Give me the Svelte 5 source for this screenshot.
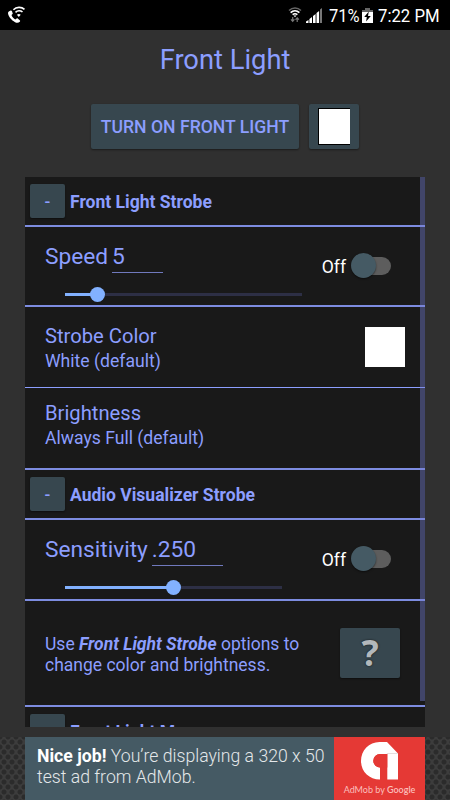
<script>
  const speed = { value: 5, percent: 13.8 };
  const sensitivity = { value: '.250', percent: 50 };
</script>

{#snippet toggle()}
  <div class="toggle"><span>Off</span><i class="track"><b></b></i></div>
{/snippet}

{#snippet slider(percent)}
  <div class="slider">
    <div class="fill" style="width: {percent}%"></div>
    <div class="thumb" style="left: {percent}%"></div>
  </div>
{/snippet}

<div class="screen">
  <header class="status">
    <svg class="call" width="18" height="18" viewBox="0 0 18 18" fill="none" stroke="#fff">
      <path d="M.8 5.600 2.600 4.600c.8-.2 1.200.2 1.500 1l.7 2.200-1.300 1.300c.7 2 1.900 3.300 3.700 4.300l1.500-.9c.6-.3 1.100-.1 1.600.4l1.700 1.600c.3.4.2.8-.2 1.200-1.300 1.400-3 1.300-4.700.5C3.400 14.300.4 10.500 0 7.300 0 6.500.2 6 .8 5.600Z" fill="#fff" stroke="none" />
      <path d="M5.400 3.700C8.400.7 13.500.7 16.500 3.300M7.500 6.300c2-1.900 5-2 7-.3" stroke-width="1.600" />
      <path d="M8.900 8.700c1.200-1.100 2.700-1.100 3.800 0L10.800 11Z" fill="#fff" stroke="none" />
    </svg>
    <div class="right">
      <svg width="14" height="18" viewBox="0 0 14 18" fill="none">
        <path d="M1 4.500C4.500 1.300 9.500 1.300 13 4.500" stroke="#666" stroke-width="1.500" />
        <path d="M2.600 6.600c2.600-2.300 6.200-2.300 8.800 0M4.600 8.700c1.500-1.200 3.300-1.200 4.800 0" stroke="#fff" stroke-width="1.600" />
        <path d="M5.500 9.600h3L7 11.200Z" fill="#fff" />
        <path d="M4.700 11v4M3 13.400l1.700 1.900 1.700-1.900M9.200 16v-4M7.500 13.700l1.700-1.900 1.700 1.900" stroke="#777" stroke-width="1.200" />
      </svg>
      <svg class="signal" width="17" height="17" viewBox="0 0 17 17" fill="#fff">
        <path d="M0 17v-1.500l2.500-1.500v3ZM3.400 17v-4L6 11v6ZM7 17v-7l2.600-2v9ZM10.500 17V7l2.600-2v12Z" />
        <path d="M14 17V3.500L16 2v15Z" fill="#777" />
      </svg>
      <span class="percent">71%</span>
      <svg class="battery" width="11" height="17" viewBox="0 0 11 17">
        <path d="M3 1h5v2h3v3H0V3h3Z" fill="#666" />
        <path d="M0 5h11v11H0Z" fill="#fff" />
        <path d="M6.800 4.500 2.200 10h2.600l-.7 4.500L8.800 9H6Z" fill="#000" />
      </svg>
      <span class="clock">7:22 PM</span>
    </div>
  </header>

  <h1><span>Front Light</span></h1>
  <div class="actions">
    <button class="turn"><span>TURN ON FRONT LIGHT</span></button>
    <button class="colour" aria-label="Front light color"><i></i></button>
  </div>

  <main>
    <section class="head"><button>-</button><h2>Front Light Strobe</h2></section>

    <section class="control">
      <div class="top">
        <label for="speed">Speed</label>
        <span id="speed" class="field">{speed.value}</span>
      </div>
      {@render toggle()}
      {@render slider(speed.percent)}
    </section>

    <section class="option strobe">
      <div><h3>Strobe Color</h3><p>White (default)</p></div>
      <i class="swatch"></i>
    </section>

    <section class="option bright">
      <div><h3>Brightness</h3><p>Always Full (default)</p></div>
    </section>

    <section class="head"><button>-</button><h2>Audio Visualizer Strobe</h2></section>

    <section class="control sens">
      <div class="top">
        <label for="sensitivity">Sensitivity</label>
        <span id="sensitivity" class="field">{sensitivity.value}</span>
      </div>
      {@render toggle()}
      {@render slider(sensitivity.percent)}
    </section>

    <section class="note">
      <p>Use <b><em>Front Light Strobe</em></b> options to<br />change color and brightness.</p>
      <button>?</button>
    </section>

    <section class="head last"><button>-</button><h2>Front Light Morse</h2></section>
    <div class="scrollbar"></div>
  </main>

  <footer>
    <div class="ad">
      <p><b>Nice job!</b> You’re displaying a 320 x 50<br />test ad from AdMob.</p>
      <div class="logo">
        <svg width="38" height="38" viewBox="0 0 38 38">
          <path d="M18.500 0H26L37 11.500V37.500H26.300V12H19a6.700 6.700 0 0 0 0 13.400V37.500C8 37.500 0 29.500 0 19S8 0 18.500 0Z" fill="#fff" />
          <path d="M19 12h7.300v13.400H19a6.700 6.700 0 0 1 0-13.400Z" fill="#e53935" />
          <path d="M26.300 12H37v-1H25.500Z" fill="#e5dede" />
        </svg>
        <span>AdMob by <b>Google</b></span>
      </div>
    </div>
  </footer>
</div>

<style>
  :global(body) { margin: 0; background: #303030; }
  .screen {
    width: 450px; height: 800px; overflow: hidden; display: flex; flex-direction: column;
    background: #303030; color: #8c9eff; font-family: Roboto, "Noto Sans", sans-serif;
  }
  .screen * { box-sizing: border-box; }
  h1, h2, h3, p { margin: 0; font-weight: 400; white-space: nowrap; }
  button { border: 0; padding: 0; margin: 0; font: inherit; color: inherit; background: #37474f; border-radius: 2px; box-shadow: 0 1px 2px rgba(0, 0, 0, .45); flex: none; }
  svg, i { display: block; flex: none; }

  .status { height: 30px; flex: none; background: #000; color: #fff; display: flex; justify-content: space-between; padding: 6px 11px 0 8px; }
  .right { display: flex; font-size: 18.700px; line-height: 20px; }
  .signal { margin-left: 4px; }
  .percent { width: 29px; margin-left: 6px; transform: scaleX(.88); transform-origin: left; }
  .battery { margin: 1px 5px 0 4px; }
  .clock { width: 61px; white-space: nowrap; transform: scaleX(.895); transform-origin: left; }

  h1 { height: 60px; flex: none; text-align: center; font-size: 27.300px; line-height: 60px; }
  .actions { display: flex; justify-content: center; gap: 10px; margin-top: 14px; height: 45px; flex: none; }
  .turn { width: 208px; font-size: 17.600px; font-weight: 500; white-space: nowrap; padding-top: 1px; }
  .colour { width: 50px; display: flex; align-items: center; justify-content: center; }
  .colour i { width: 32px; height: 37px; background: #fff; border: 1px solid #000; border-right: 0; }

  main { position: relative; width: 400px; height: 550px; flex: none; margin: 28px 25px 0; overflow: hidden; background: #191919; }
  section { border-bottom: 2px solid #7d8ce0; display: flex; }
  .head { height: 50px; padding: 7px 5px; gap: 5px; }
  .head button { width: 35px; height: 34px; font-size: 17px; font-weight: 500; color: #8c9eff; }
  h2 { font-size: 17.550px; font-weight: 700; line-height: 35px; padding-top: 1px; }

  .control { height: 80px; flex-wrap: wrap; justify-content: space-between; padding: 12px 34px 0 20px; align-content: flex-start; }
  .top { display: flex; height: 34px; gap: 4px; font-size: 22.700px; line-height: 35px; }
  .field { width: 51px; height: 34px; border-bottom: 1px solid #7079bd; }
  .toggle { display: flex; height: 25px; align-items: center; gap: 9px; margin-top: 14px; color: #fff; font-size: 17.600px; }
  .toggle span { padding-top: 2px; }
  .track { width: 36px; height: 18px; border-radius: 9px; background: #5d5d5d; position: relative; }
  .track b { position: absolute; left: -4px; top: -4px; width: 25px; height: 25px; border-radius: 50%; background: #455a64; box-shadow: 0 1px 2px rgba(0, 0, 0, .5); }
  .slider { position: relative; width: 237px; height: 3px; margin: 15px 0 0 20px; background: #2d2f45; }
  .fill { height: 100%; background: #82b1ff; }
  .thumb { position: absolute; top: -6px; width: 15px; height: 15px; margin-left: -7.500px; border-radius: 50%; background: #82b1ff; }
  .sens { height: 81px; }
  .sens .field { width: 71px; }
  .sens .slider { width: 217px; }

  .option { height: 81px; justify-content: space-between; padding: 16px 20px 0; }
  .strobe { border-bottom-width: 1px; border-color: #8c9eff; }
  h3 { font-size: 20.200px; line-height: 26px; }
  .option p { font-size: 17.600px; line-height: 25px; }
  .swatch { width: 40px; height: 40px; margin-top: 4px; background: #fff; }
  .bright { height: 82px; padding-top: 12px; }

  .note { height: 106px; justify-content: space-between; padding: 27px 25px 0 20px; }
  .note p { font-size: 17.500px; line-height: 20.500px; margin-top: 6px; }
  .note button { width: 60px; height: 50px; font: 700 36px/50px "Noto Sans", sans-serif; color: #b3b8bb; text-shadow: 0 0 2px #111; }
  .scrollbar { position: absolute; right: 0; top: 0; width: 5px; height: 524px; background: rgba(117, 126, 207, .44); }

  footer {
    height: 63px; flex: none; margin-top: 10px; padding: 0 25px;
    background-color: #3c3c3c;
    background-image: radial-gradient(circle, #2b2b2b 2px, transparent 3px), radial-gradient(circle, #2b2b2b 2px, transparent 3px);
    background-size: 8px 10px; background-position: 0 0, 4px 5px;
  }
  .ad { display: flex; height: 63px; background: #455a64; }
  .ad p { width: 309px; padding: 9px 0 0 12px; font-size: 17.650px; font-weight: 300; line-height: 21px; color: #e4e8ea; }
  .ad p b { font-weight: 700; color: #fff; }
  .logo { width: 91px; background: #e53935; display: flex; flex-direction: column; align-items: center; padding-top: 5px; }
  .logo span { margin-top: 3px; font: 400 9px/13px Lato, sans-serif; color: #fbbfbc; white-space: nowrap; }
  .logo b { font-weight: 600; }
</style>
